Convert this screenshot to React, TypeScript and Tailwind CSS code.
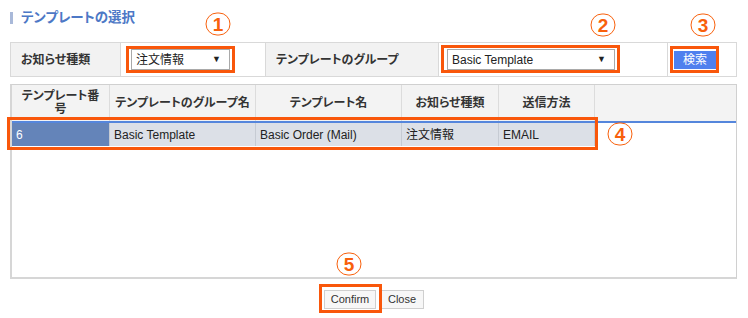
const FONT = "font-['Liberation_Sans','Noto_Sans_CJK_JP',sans-serif] [font-feature-settings:'palt']"

const COLS = [
  { label: 'テンプレート番号', w: 'w-[98px]' },
  { label: 'テンプレートのグループ名', w: 'w-[146px]' },
  { label: 'テンプレート名', w: 'w-[146px]' },
  { label: 'お知らせ種類', w: 'w-[97px]' },
  { label: '送信方法', w: 'w-[96px]' },
]

const ROW = ['6', 'Basic Template', 'Basic Order (Mail)', '注文情報', 'EMAIL']

function Select({ value, className }: { value: string; className: string }) {
  return (
    <div className={`h-[21px] border border-[#a9a9a9] bg-white flex items-center pl-[4px] pr-[8px] text-[12px] text-[#222] ${className}`}>
      <span className="flex-1">{value}</span>
      <span className="text-[9px] text-[#222]">▼</span>
    </div>
  )
}

// annotation: thin orange ring with a bold digit
function Mark({ n, x, y }: { n: string; x: number; y: number }) {
  return (
    <span
      className="absolute -translate-x-1/2 -translate-y-1/2 w-[25px] h-[23px] rounded-full border border-[#f8600c] flex items-center justify-center text-[19px] font-bold leading-none text-[#f8600c] font-['Liberation_Sans',sans-serif]"
      style={{ left: x, top: y }}
    >
      {n}
    </span>
  )
}

function Box({ x, y, w, h }: { x: number; y: number; w: number; h: number }) {
  return (
    <div
      className="absolute border-[3px] border-[#f9570b] pointer-events-none"
      style={{ left: x, top: y, width: w, height: h }}
    />
  )
}

export default function App() {
  return (
    <div className={`relative w-[748px] h-[318px] bg-white text-[#333] ${FONT}`}>
      <div className="flex flex-col pl-[10px] pr-[11px] pt-[12px]">
        {/* title */}
        <div className="flex items-center gap-[8px] h-[12px]">
          <div className="w-[3px] h-[12px] bg-[#a9b9d9]" />
          <h2 className="text-[13.5px] font-bold text-[#4d78c6] leading-none">テンプレートの選択</h2>
        </div>

        {/* filter */}
        <div className="mt-[18px] flex h-[35px] border border-[#d9d9d9] text-[12px]">
          <div className="w-[110px] bg-[#f2f2f2] flex items-center pl-[10px] font-bold border-r border-[#d9d9d9]">
            お知らせ種類
          </div>
          <div className="w-[145px] flex items-center pl-[10px] border-r border-[#d9d9d9]">
            <Select value="注文情報" className="w-[99px]" />
          </div>
          <div className="w-[173px] bg-[#f2f2f2] flex items-center pl-[10px] font-bold border-r border-[#d9d9d9]">
            テンプレートのグループ
          </div>
          <div className="w-[229px] flex items-center pl-[8px] border-r border-[#d9d9d9]">
            <Select value="Basic Template" className="w-[168px]" />
          </div>
          <div className="flex-1 flex items-center pl-[6px]">
            <button className="w-[42px] h-[18px] bg-[#4f80ee] text-white text-[12px] leading-none flex items-center justify-center">
              検索
            </button>
          </div>
        </div>

        {/* grid */}
        <div className="mt-[7px] h-[195px] border border-[#d0d0d0] border-l-2 border-b-2 border-l-[#d6d6d6] border-b-[#d6d6d6] flex flex-col">
          <div className="flex h-[36px] bg-[#f3f3f3] text-[12px] font-semibold text-[#333]">
            {COLS.map((c, i) => (
              <div key={i} className={`${c.w} border-r border-[#dcdcdc] flex items-center justify-center text-center leading-[13px]`}>
                {i === 0 ? (
                  <span>
                    テンプレート番
                    <br />号
                  </span>
                ) : (
                  c.label
                )}
              </div>
            ))}
            <div className="flex-1" />
          </div>
          <div className="h-[2px] bg-[#5586dc]" />
          <div className="flex h-[23px] text-[12px] text-[#222]">
            {ROW.map((v, i) => (
              <div
                key={i}
                className={`${COLS[i].w} flex items-center pl-[4px] border-r border-[#c6cbd3] ${
                  i === 0 ? 'bg-[#6484b9] text-white border-[#8ea3c6]' : 'bg-[#dce0e7]'
                }`}
              >
                {v}
              </div>
            ))}
            <div className="flex-1" />
          </div>
        </div>

        {/* buttons */}
        <div className="mt-[11px] flex justify-center gap-[4px] pl-[1px]">
          <button className="w-[52px] h-[19px] border border-[#cfcfcf] bg-[#f7f7f7] text-[11px] text-[#333] leading-none">
            Confirm
          </button>
          <button className="w-[44px] h-[19px] border border-[#cfcfcf] bg-[#f7f7f7] text-[11px] text-[#333] leading-none">
            Close
          </button>
        </div>
      </div>

      {/* annotations */}
      <Box x={126} y={46} w={109} h={27} />
      <Box x={441} y={45} w={179} h={28} />
      <Box x={670} y={46} w={49} h={27} />
      <Box x={7} y={117} w={591} h={33} />
      <Box x={319} y={284} w={63} h={29} />
      <Mark n="1" x={218} y={24} />
      <Mark n="2" x={603} y={25} />
      <Mark n="3" x={703} y={25} />
      <Mark n="4" x={620} y={134} />
      <Mark n="5" x={349} y={264} />
    </div>
  )
}
